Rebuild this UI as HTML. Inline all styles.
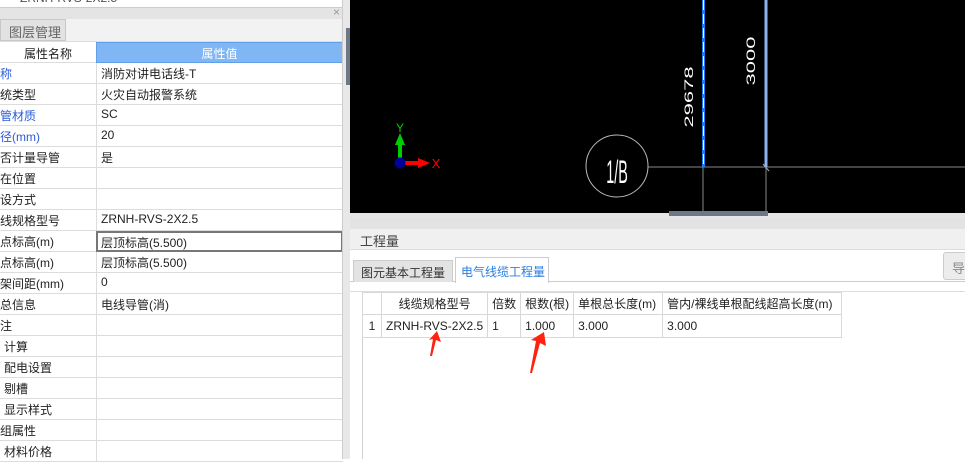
<!DOCTYPE html>
<html><head><meta charset="utf-8"><style>
*{margin:0;padding:0;box-sizing:border-box}
body{width:965px;height:459px;overflow:hidden;background:#fff;position:relative;font-family:"Liberation Sans","Noto Sans CJK SC",sans-serif;font-size:12px;color:#222}
.a{position:absolute}
.row{position:absolute;left:0;width:343px;height:21px;border-bottom:1px solid #dcdcdc}
.row .k{position:absolute;left:0;top:2px;white-space:nowrap}
.row .v{position:absolute;left:96px;top:0;width:247px;height:21px;border-left:1px solid #dcdcdc;padding:2px 0 0 4px;white-space:nowrap}
.blue{color:#2a5bd7}
td{border:1px solid #d8d8d8;height:22px;padding:0 4px;white-space:nowrap;font-size:12px}
table{border-collapse:collapse;position:absolute;left:362px;top:292px}
</style></head><body>
<div class="a" style="left:0;top:0;width:343px;height:8px;background:#fff;border-bottom:1px solid #ccc;overflow:hidden"><div style="position:absolute;left:20px;top:-9px;color:#555;font-size:12px">ZRNH-RVS-2X2.5</div></div>
<div class="a" style="left:0;top:8px;width:343px;height:11px;background:#e4e4e4"></div>
<div class="a" style="left:333px;top:5px;color:#999;font-size:12px">×</div>
<div class="a" style="left:0;top:19px;width:343px;height:23px;background:#f2f2f2;border-bottom:1px solid #ddd"></div>
<div class="a" style="left:0;top:19px;width:66px;height:22px;background:#e2e2e2;border:1px solid #c8c8c8;color:#666;font-size:13px;padding:2px 0 0 8px">图层管理</div>
<div class="a" style="left:0;top:42px;width:96px;height:21px;border-bottom:1px solid #dcdcdc;text-align:center;padding-top:3px;font-size:12px">属性名称</div>
<div class="a" style="left:96px;top:42px;width:247px;height:21px;background:#7fb6f3;border:1px solid #5ea0ea;color:#fff;text-align:center;padding-top:2px">属性值</div>
<div class="row" style="top:63px"><span class="k blue">称</span><span class="v">消防对讲电话线-T</span></div>
<div class="row" style="top:84px"><span class="k">统类型</span><span class="v">火灾自动报警系统</span></div>
<div class="row" style="top:105px"><span class="k blue">管材质</span><span class="v">SC</span></div>
<div class="row" style="top:126px"><span class="k blue">径(mm)</span><span class="v">20</span></div>
<div class="row" style="top:147px"><span class="k">否计量导管</span><span class="v">是</span></div>
<div class="row" style="top:168px"><span class="k">在位置</span><span class="v"></span></div>
<div class="row" style="top:189px"><span class="k">设方式</span><span class="v"></span></div>
<div class="row" style="top:210px"><span class="k">线规格型号</span><span class="v">ZRNH-RVS-2X2.5</span></div>
<div class="row" style="top:231px"><span class="k">点标高(m)</span><span class="v" style="border:2px solid #777;padding:1px 0 0 3px">层顶标高(5.500)</span></div>
<div class="row" style="top:252px"><span class="k">点标高(m)</span><span class="v">层顶标高(5.500)</span></div>
<div class="row" style="top:273px"><span class="k">架间距(mm)</span><span class="v">0</span></div>
<div class="row" style="top:294px"><span class="k">总信息</span><span class="v">电线导管(消)</span></div>
<div class="row" style="top:315px"><span class="k">注</span><span class="v"></span></div>
<div class="row" style="top:336px"><span class="k" style="left:4px">计算</span><span class="v"></span></div>
<div class="row" style="top:357px"><span class="k" style="left:4px">配电设置</span><span class="v"></span></div>
<div class="row" style="top:378px"><span class="k" style="left:4px">剔槽</span><span class="v"></span></div>
<div class="row" style="top:399px"><span class="k" style="left:4px">显示样式</span><span class="v"></span></div>
<div class="row" style="top:420px"><span class="k">组属性</span><span class="v"></span></div>
<div class="row" style="top:441px"><span class="k" style="left:4px">材料价格</span><span class="v"></span></div>
<div class="a" style="left:342px;top:0;width:1px;height:459px;background:#ccc"></div>
<div class="a" style="left:343px;top:0;width:7px;height:459px;background:#e8e8e8"></div>
<div class="a" style="left:346px;top:28px;width:4px;height:57px;background:#6d7786"></div>
<svg class="a" style="left:350px;top:0" width="615" height="213" viewBox="350 0 615 213">
<rect x="350" y="0" width="615" height="213" fill="#000"/>
<line x1="648" y1="167" x2="965" y2="167" stroke="#888" stroke-width="1"/>
<line x1="703" y1="167" x2="703" y2="213" stroke="#888"/>
<line x1="766" y1="167" x2="766" y2="213" stroke="#888"/>
<line x1="703.5" y1="0" x2="703.5" y2="167" stroke="#1e7bf0" stroke-width="3"/>
<line x1="703.5" y1="0" x2="703.5" y2="167" stroke="#fff" stroke-width="1" stroke-dasharray="10,4"/>
<line x1="766" y1="0" x2="766" y2="167" stroke="#8ab4f0" stroke-width="3"/>
<line x1="763" y1="164" x2="769" y2="171" stroke="#aaa"/>
<circle cx="617" cy="166" r="31" fill="none" stroke="#bbb" stroke-width="1"/>
<text transform="translate(617,183) scale(0.45,1)" x="0" y="0" fill="#fff" font-size="32" text-anchor="middle" font-family="Liberation Sans">1/B</text>
<text transform="translate(693,97) rotate(-90) scale(1,0.55)" fill="#fff" font-size="22" text-anchor="middle" font-family="Liberation Sans">29678</text>
<text transform="translate(755,61) rotate(-90) scale(1,0.55)" fill="#fff" font-size="22" text-anchor="middle" font-family="Liberation Sans">3000</text>
<line x1="400" y1="163" x2="400" y2="143" stroke="#0c0" stroke-width="4"/>
<polygon points="395,145 405,145 400,133" fill="#0c0"/>
<text x="400" y="132" fill="#0c0" font-size="12" text-anchor="middle">Y</text>
<line x1="400" y1="163" x2="420" y2="163" stroke="#f00" stroke-width="4"/>
<polygon points="418,158 430,163 418,168" fill="#f00"/>
<text x="436" y="168" fill="#f00" font-size="13" text-anchor="middle">X</text>
<circle cx="400" cy="163" r="5.5" fill="#00009b"/>
</svg>
<div class="a" style="left:350px;top:213px;width:615px;height:5px;background:#e6e6e6"></div>
<div class="a" style="left:669px;top:211px;width:99px;height:5px;background:#6d7786"></div>
<div class="a" style="left:350px;top:218px;width:615px;height:11px;background:#e3e3e3"></div>
<div class="a" style="left:350px;top:229px;width:615px;height:21px;background:#f0f0f0;border-bottom:1px solid #ddd;padding:2px 0 0 10px;font-size:13px;color:#444">工程量</div>
<div class="a" style="left:350px;top:250px;width:615px;height:32px;background:#fff;border-bottom:1px solid #ccc"></div>
<div class="a" style="left:353px;top:260px;width:100px;height:22px;background:#e3e3e3;border:1px solid #ccc;border-bottom:none;padding:3px 0 0 7px;font-size:12px;color:#333">图元基本工程量</div>
<div class="a" style="left:455px;top:257px;width:94px;height:26px;background:#fff;border:1px solid #ccc;border-bottom:none;padding:5px 0 0 5px;font-size:12px;color:#2a7de0">电气线缆工程量</div>
<div class="a" style="left:943px;top:252px;width:30px;height:28px;background:#ececec;border:1px solid #ccc;border-radius:3px;padding:5px 0 0 8px;color:#888;font-size:13px">导</div>
<div class="a" style="left:350px;top:291px;width:615px;height:1px;background:#ddd"></div>
<div class="a" style="left:362px;top:292px;width:1px;height:167px;background:#d0d0d0"></div>
<table>
<tr><td style="width:19px;height:21px"></td><td style="width:106px;text-align:center">线缆规格型号</td><td style="width:31px">倍数</td><td style="width:53px">根数(根)</td><td style="width:89px">单根总长度(m)</td><td style="width:179px">管内/裸线单根配线超高长度(m)</td></tr>
<tr><td style="text-align:center;height:23px">1</td><td>ZRNH-RVS-2X2.5</td><td>1</td><td>1.000</td><td>3.000</td><td>3.000</td></tr>
</table>
<svg class="a" style="left:0;top:0" width="965" height="459">
<polygon points="437,331 441,342 436,340 432,356 430,356 433,339 429,340" fill="#f21"/>
<polygon points="544,332 546,346 540,343 532,373 530,373 536,341 531,340" fill="#f21"/>
</svg>
</body></html>
